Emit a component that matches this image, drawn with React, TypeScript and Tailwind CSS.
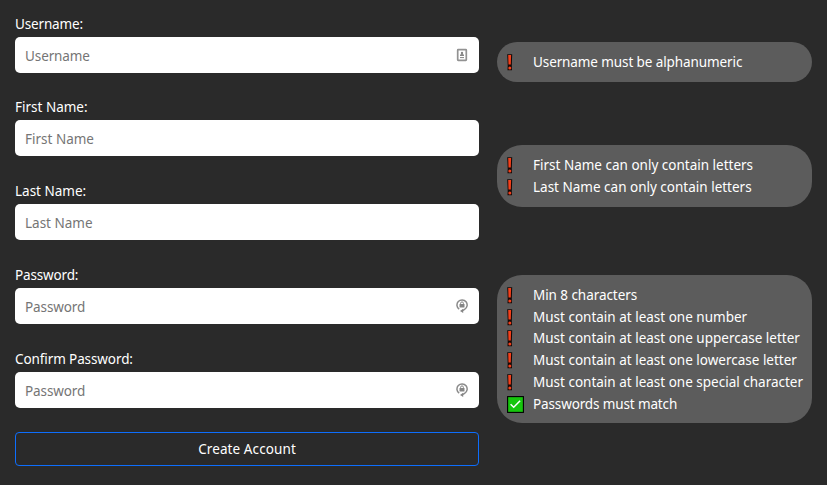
import React from "react";

type Mark = "card" | "lock";

function CardIcon() {
  return (
    <svg width="12" height="14" viewBox="0 0 12 14" fill="none" className="block">
      <rect x="1.7" y="1.7" width="8.6" height="10.6" rx="0.5" stroke="#929292" strokeWidth="1.7" />
      <circle cx="6" cy="4.9" r="1.2" fill="#858585" />
      <path d="M4 8V7.2Q4 6 6 6T8 7.2V8Z" fill="#858585" />
      <path d="M4 9.6H8" stroke="#858585" strokeWidth="1" />
    </svg>
  );
}

function LockIcon() {
  return (
    <svg width="12" height="16" viewBox="0 0 12 16" fill="none" className="block">
      <path d="M3.2 11.2A5.1 5.1 0 1 1 8.6 11.4L6.2 12.8" stroke="#8b8b8b" strokeWidth="1.5" />
      <path d="M7.2 10.7L4 12.9L7.2 15Z" fill="#858585" />
      <path d="M4.6 6.4V5.3a1.4 1.4 0 0 1 2.8 0V6.4" stroke="#858585" strokeWidth="1" />
      <rect x="3.5" y="6.1" width="5" height="3.3" rx="0.3" fill="#858585" />
    </svg>
  );
}

interface FieldProps {
  label: string;
  hint: string;
  mark?: Mark;
  className?: string;
  labelClass?: string;
  hintClass?: string;
}

function Field({ label, hint, mark, className = "h-[84px]", labelClass = "", hintClass = "" }: FieldProps) {
  return (
    <div className={className}>
      <div className={`mb-[3px] h-5 leading-5 text-white ${labelClass}`}>{label}</div>
      <div className="flex h-9 items-center justify-between rounded-[5px] bg-white pl-[10px] pr-[11px]">
        <span className={`pt-[2px] leading-5 text-[#757575] ${hintClass}`}>{hint}</span>
        {mark === "card" && <CardIcon />}
        {mark === "lock" && <LockIcon />}
      </div>
    </div>
  );
}

function Bang() {
  return (
    <svg width="17" height="17" viewBox="0 0 17 17" className="block">
      <path d="M0.2 0.2H5.2L4.8 11.5L5 16.3H0.5L0.7 11.5Z" fill="#160806" />
      <path d="M1.2 1H4.1L3.8 10.5H1.5Z" fill="#f5401b" />
      <circle cx="2.8" cy="14" r="1.5" fill="#f5401b" />
    </svg>
  );
}

function Check() {
  return (
    <svg width="17" height="17" viewBox="0 0 17 17" className="block">
      <rect x="0.6" y="0.6" width="15.8" height="15.8" fill="#16c60c" stroke="#000" strokeWidth="1.1" />
      <path d="M3.6 8.3L6.7 11.2L13.1 4.8" fill="none" stroke="#fff" strokeWidth="1.5" />
    </svg>
  );
}

function Rule({ text, ok = false, className = "" }: { text: string; ok?: boolean; className?: string }) {
  return (
    <li className="flex h-[21.8px] items-center">
      <span className="w-[26px] shrink-0 pt-px">{ok ? <Check /> : <Bang />}</span>
      <span className={`whitespace-nowrap ${className}`}>{text}</span>
    </li>
  );
}

function Panel({ children, className = "" }: { children: React.ReactNode; className?: string }) {
  return (
    <ul className={`w-[315px] rounded-[25px] bg-[#5c5c5c] px-[10px] py-[9px] leading-5 text-white ${className}`}>
      {children}
    </ul>
  );
}

export default function App() {
  return (
    <main className="flex h-[485px] w-[827px] overflow-hidden bg-[#2a2a2a] pl-[15px] font-['Noto_Sans',sans-serif] text-[13.5px]">
      <form className="w-[464px] pt-[14px]">
        <Field label="Username:" hint="Username" mark="card" className="h-[83px]" labelClass="tracking-[-0.15px]" hintClass="tracking-[-0.1px]" />
        <Field label="First Name:" hint="First Name" />
        <Field label="Last Name:" hint="Last Name" />
        <Field label="Password:" hint="Password" mark="lock" labelClass="tracking-[-0.15px]" hintClass="tracking-[-0.1px]" />
        <Field label="Confirm Password:" hint="Password" mark="lock" labelClass="tracking-[-0.1px]" hintClass="tracking-[-0.1px]" />
        <button type="button" className="-mt-px block h-[34px] w-full rounded-[4px] border border-[#0d6efd] leading-5 tracking-[0.1px] text-white">
          Create Account
        </button>
      </form>
      <aside className="ml-[18px] pt-[42px]">
        <Panel className="h-10">
          <Rule text="Username must be alphanumeric" className="tracking-[-0.1px]" />
        </Panel>
        <Panel className="mt-[63px] h-[62px]">
          <Rule text="First Name can only contain letters" />
          <Rule text="Last Name can only contain letters" />
        </Panel>
        <Panel className="mt-[68px] h-[148px]">
          <Rule text="Min 8 characters" className="tracking-[-0.06px]" />
          <Rule text="Must contain at least one number" />
          <Rule text="Must contain at least one uppercase letter" />
          <Rule text="Must contain at least one lowercase letter" />
          <Rule text="Must contain at least one special character" />
          <Rule text="Passwords must match" ok className="tracking-[-0.13px]" />
        </Panel>
      </aside>
    </main>
  );
}
